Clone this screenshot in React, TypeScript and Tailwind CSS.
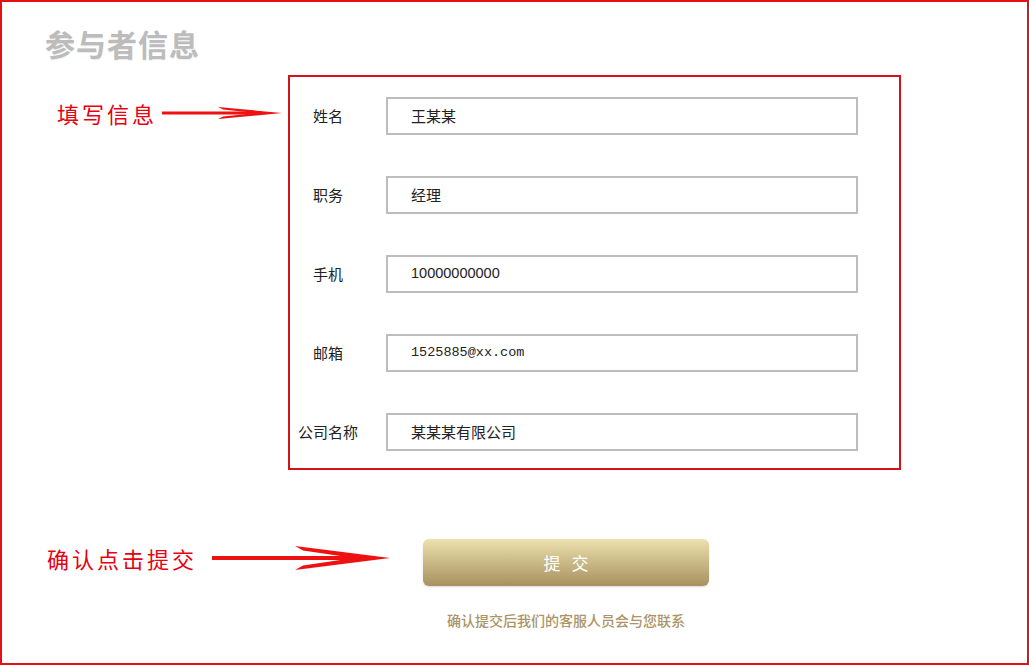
const fields = [
  { label: "姓名", value: "王某某", kind: "cjk" },
  { label: "职务", value: "经理", kind: "cjk" },
  { label: "手机", value: "10000000000", kind: "num" },
  { label: "邮箱", value: "1525885@xx.com", kind: "mono" },
  { label: "公司名称", value: "某某某有限公司", kind: "cjk" },
];

const valueClass: Record<string, string> = {
  cjk: "text-[15px] font-['Noto_Sans_CJK_SC',sans-serif]",
  num: "text-[14.5px] font-['Liberation_Sans','Noto_Sans_CJK_SC',sans-serif]",
  mono: "text-[13.5px] font-['Liberation_Mono',monospace]",
};

// small red arrow beside the form
const ArrowSmall = () => (
  <svg width="122" height="16" viewBox="0 0 122 16" className="block">
    <rect x="0" y="6.5" width="100" height="3" fill="#ee1111" />
    <polygon points="56,2 120,8 56,14 61,11.5 94,8 61,4.5" fill="#ee1111" />
  </svg>
);

// larger red arrow beside the submit button
const ArrowLarge = () => (
  <svg width="180" height="26" viewBox="0 0 180 26" className="block">
    <rect x="0" y="11" width="150" height="4" fill="#ee1111" />
    <polygon points="83,1 178,13 83,25 91,20.5 142,13 91,5.5" fill="#ee1111" />
  </svg>
);

export default function App() {
  return (
    <div className="h-[665px] w-[1029px] border-2 border-[#e60f16] bg-white font-['Noto_Sans_CJK_SC',sans-serif]">
      <h1 className="pl-[43px] pt-[23px] text-[30px] leading-[36px] font-bold tracking-[1px] text-[#bcbcbc] [text-shadow:0_1px_1px_rgba(0,0,0,0.08)]">
        参与者信息
      </h1>

      {/* form row */}
      <div className="mt-[14px] flex items-start">
        <div className="mt-[23px] flex h-[30px] w-[286px] items-center pl-[55px]">
          <span className="w-[105px] text-[22px] leading-[30px] tracking-[3px] text-[#e60012]">填写信息</span>
          <ArrowSmall />
        </div>

        <div className="flex h-[395px] w-[613px] flex-col gap-[41px] border-2 border-[#d4121c] pt-[20px]">
          {fields.map((f) => (
            <div key={f.label} className="flex h-[38px] items-center">
              <div className="w-[76px] text-center text-[15px] text-[#222]">{f.label}</div>
              <div className="ml-[20px] flex h-[38px] w-[472px] items-center border-2 border-[#bdbdbd] pl-[23px]">
                <span className={`${valueClass[f.kind]} text-[#222]`}>{f.value}</span>
              </div>
            </div>
          ))}
        </div>
      </div>

      {/* submit row */}
      <div className="mt-[69px] flex items-start">
        <div className="flex h-[38px] w-[421px] items-center pl-[45px]">
          <span className="w-[165px] text-[22px] leading-[30px] tracking-[3px] text-[#e60012]">确认点击提交</span>
          <ArrowLarge />
        </div>

        <div className="flex flex-col items-center">
          <button className="flex h-[47px] w-[286px] items-center justify-center gap-[11px] rounded-[6px] bg-linear-to-b from-[#ece2ae] to-[#a8915f] text-[17px] text-white shadow-[0_1px_2px_rgba(0,0,0,0.15)]">
            <span>提</span>
            <span>交</span>
          </button>
          <p className="mt-[24px] text-[14px] leading-[20px] font-medium text-[#ab9466]">
            确认提交后我们的客服人员会与您联系
          </p>
        </div>
      </div>
    </div>
  );
}
